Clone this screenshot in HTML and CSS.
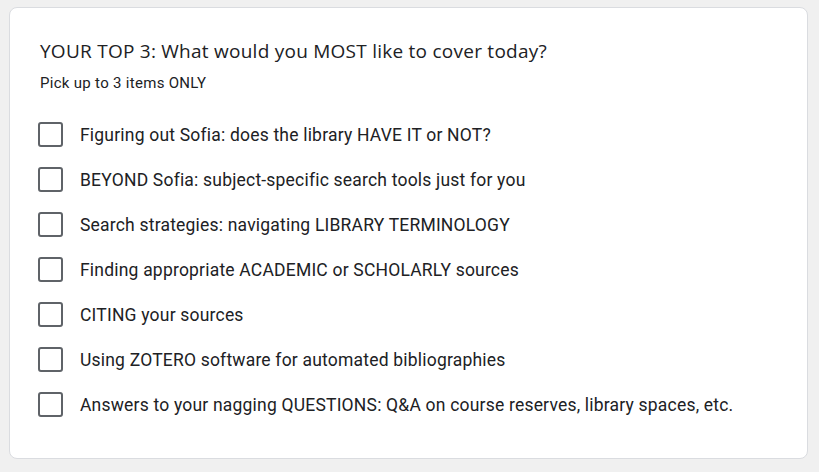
FILE: index.html
```html
<!DOCTYPE html>
<html>
<head>
<meta charset="utf-8">
<link rel="stylesheet" href="styles.css">
</head>
<body>
<div class="card">
  <div class="title">YOUR TOP 3: What would you MOST like to cover today?</div>
  <div class="desc">Pick up to 3 items ONLY</div>
  <div class="options">
    <label class="opt"><span class="box"></span><span class="lbl">Figuring out Sofia: does the library HAVE IT or NOT?</span></label>
    <label class="opt"><span class="box"></span><span class="lbl">BEYOND Sofia: subject-specific search tools just for you</span></label>
    <label class="opt"><span class="box"></span><span class="lbl">Search strategies: navigating LIBRARY TERMINOLOGY</span></label>
    <label class="opt"><span class="box"></span><span class="lbl">Finding appropriate ACADEMIC or SCHOLARLY sources</span></label>
    <label class="opt"><span class="box"></span><span class="lbl">CITING your sources</span></label>
    <label class="opt"><span class="box"></span><span class="lbl">Using ZOTERO software for automated bibliographies</span></label>
    <label class="opt"><span class="box"></span><span class="lbl">Answers to your nagging QUESTIONS: Q&amp;A on course reserves, library spaces, etc.</span></label>
  </div>
</div>
</body>
</html>
```
FILE: styles.css
```css
html, body {
  margin: 0;
  padding: 0;
  background: #f0f0f0;
}
body {
  padding: 7px 11px 13px 9px;
  font-family: Roboto, "Liberation Sans", sans-serif;
}
.card {
  background: #fff;
  border: 1px solid #dadce0;
  border-radius: 8px;
  box-sizing: border-box;
  height: 452px;
  padding: 29px 30px 0 30px;
}
.title {
  font-family: "Open Sans", Roboto, sans-serif;
  font-size: 19px;
  line-height: 28px;
  letter-spacing: 0.25px;
  color: #202124;
}
.desc {
  margin-top: 8px;
  font-size: 15px;
  line-height: 20px;
  letter-spacing: 0.3px;
  color: #202124;
}
.options {
  margin-top: 29px;
  margin-left: -2px;
  display: flex;
  flex-direction: column;
  gap: 20px;
}
.opt {
  display: flex;
  align-items: center;
  gap: 17px;
  height: 25px;
}
.box {
  width: 25px;
  height: 25px;
  box-sizing: border-box;
  border: 2.5px solid #5f6368;
  border-radius: 3px;
  flex: none;
}
.lbl {
  font-size: 17.5px;
  color: #202124;
  letter-spacing: 0.2px;
}
```
